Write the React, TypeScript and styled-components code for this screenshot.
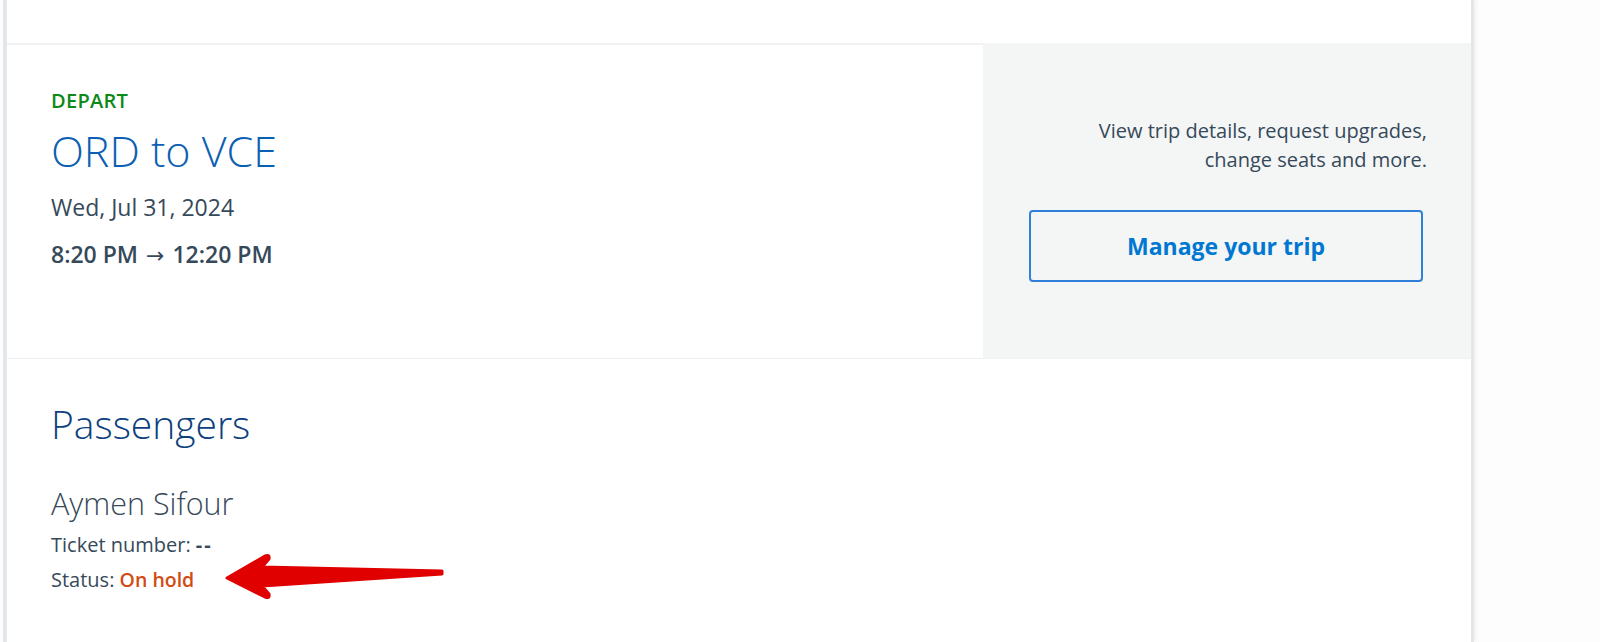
import styled, { createGlobalStyle } from "styled-components";

const GlobalStyle = createGlobalStyle`
    html, body {
        margin: 0;
        padding: 0;
        background: #fdfdfd;
    }
    body {
        font-family: "Open Sans", "Liberation Sans", sans-serif;
        color: #36495a;
    }
`;

const Page = styled.div`
    padding-left: 3px;
    height: 642px;
    overflow: hidden;
`;

const Card = styled.div`
    position: relative;
    width: 1464px;
    min-height: 642px;
    background: #ffffff;
    border-left: 4px solid #e4e7e9;
    border-right: 3px solid #e4e7e9;
    box-shadow: 3px 0 3px rgba(0, 0, 0, 0.04);
`;

const TopStrip = styled.div`
    height: 43px;
`;

const TripRow = styled.div`
    display: flex;
    height: 315px;
`;

const TripInfo = styled.div`
    flex: 1;
    border-top: 2px solid #f1f2f2;
    padding: 44px 0 0 44px;
`;

const Label = styled.div`
    font-size: 20px;
    line-height: 24px;
    font-weight: 600;
    color: #0c8a17;
    letter-spacing: 0.3px;
`;

const Route = styled.h2`
    margin: 13px 0 0;
    font-size: 43px;
    line-height: 50px;
    font-weight: 300;
    color: #0b60b3;
`;

const DateLine = styled.div<{ $bold?: boolean }>`
    margin-top: ${(p) => (p.$bold ? "17px" : "16px")};
    font-size: 23px;
    line-height: 30px;
    font-weight: ${(p) => (p.$bold ? 600 : 400)};
    color: #36495a;
`;

const Arrow = styled.span`
    font-family: "DejaVu Sans", sans-serif;
    font-weight: 400;
    font-size: 22px;
    margin: 0 2px;
`;

const ManagePanel = styled.div`
    width: 488px;
    background: #f4f5f5;
    padding: 73px 44px 0 0;
    box-sizing: border-box;
    display: flex;
    flex-direction: column;
    align-items: flex-end;
`;

const PanelText = styled.p`
    margin: 0;
    font-size: 20px;
    line-height: 29px;
    text-align: right;
    color: #36495a;
`;

const ManageButton = styled.button`
    margin: 36px 4px 0 0;
    width: 394px;
    height: 72px;
    border: 2px solid #2f80d8;
    border-radius: 4px;
    background: transparent;
    font-family: inherit;
    font-size: 23px;
    font-weight: 700;
    color: #0078d2;
    cursor: pointer;
`;

const PassengerSection = styled.div`
    border-top: 1px solid #f0f1f1;
    padding: 41px 0 0 44px;
`;

const SectionTitle = styled.h2`
    margin: 0;
    font-size: 39px;
    line-height: 48px;
    font-weight: 300;
    color: #0e3f7e;
`;

const PassengerName = styled.div`
    margin-top: 37px;
    font-size: 30.5px;
    line-height: 36px;
    font-weight: 300;
    color: #36495a;
`;

const PassengerMeta = styled.div`
    margin-top: 6px;
`;

const Meta = styled.div`
    font-size: 20px;
    line-height: 35px;
    color: #36495a;
`;

const Dashes = styled.span`
    font-weight: 700;
    letter-spacing: 2px;
`;

const StatusValue = styled.span`
    color: #d24b12;
    font-weight: 600;
    font-size: 19.5px;
`;

const Annotation = styled.svg`
    position: absolute;
    left: 213px;
    top: 548px;
    overflow: visible;
`;

export default function App() {
    return (
        <>
            <GlobalStyle />
            <Page>
                <Card>
                    <TopStrip />
                    <TripRow>
                        <TripInfo>
                            <Label>DEPART</Label>
                            <Route>ORD to VCE</Route>
                            <DateLine>Wed, Jul 31, 2024</DateLine>
                            <DateLine $bold>
                                8:20 PM <Arrow>→</Arrow> 12:20 PM
                            </DateLine>
                        </TripInfo>
                        <ManagePanel>
                            <PanelText>
                                View trip details, request upgrades,
                                <br />
                                change seats and more.
                            </PanelText>
                            <ManageButton>Manage your trip</ManageButton>
                        </ManagePanel>
                    </TripRow>
                    <PassengerSection>
                        <SectionTitle>Passengers</SectionTitle>
                        <PassengerName>Aymen Sifour</PassengerName>
                        <PassengerMeta>
                            <Meta>
                                Ticket number: <Dashes>--</Dashes>
                            </Meta>
                            <Meta>
                                Status: <StatusValue>On hold</StatusValue>
                            </Meta>
                        </PassengerMeta>
                    </PassengerSection>
                    <Annotation width="230" height="56" viewBox="0 0 230 56">
                        <path
                            d="M7 30 L45 8 Q50 6 49 11 L42 19 L222 23 L222 26 L42 38 L49 46 Q50 51 45 49 Z"
                            fill="#e00000"
                            stroke="#e00000"
                            strokeWidth="3"
                            strokeLinejoin="round"
                        />
                    </Annotation>
                </Card>
            </Page>
        </>
    );
}
